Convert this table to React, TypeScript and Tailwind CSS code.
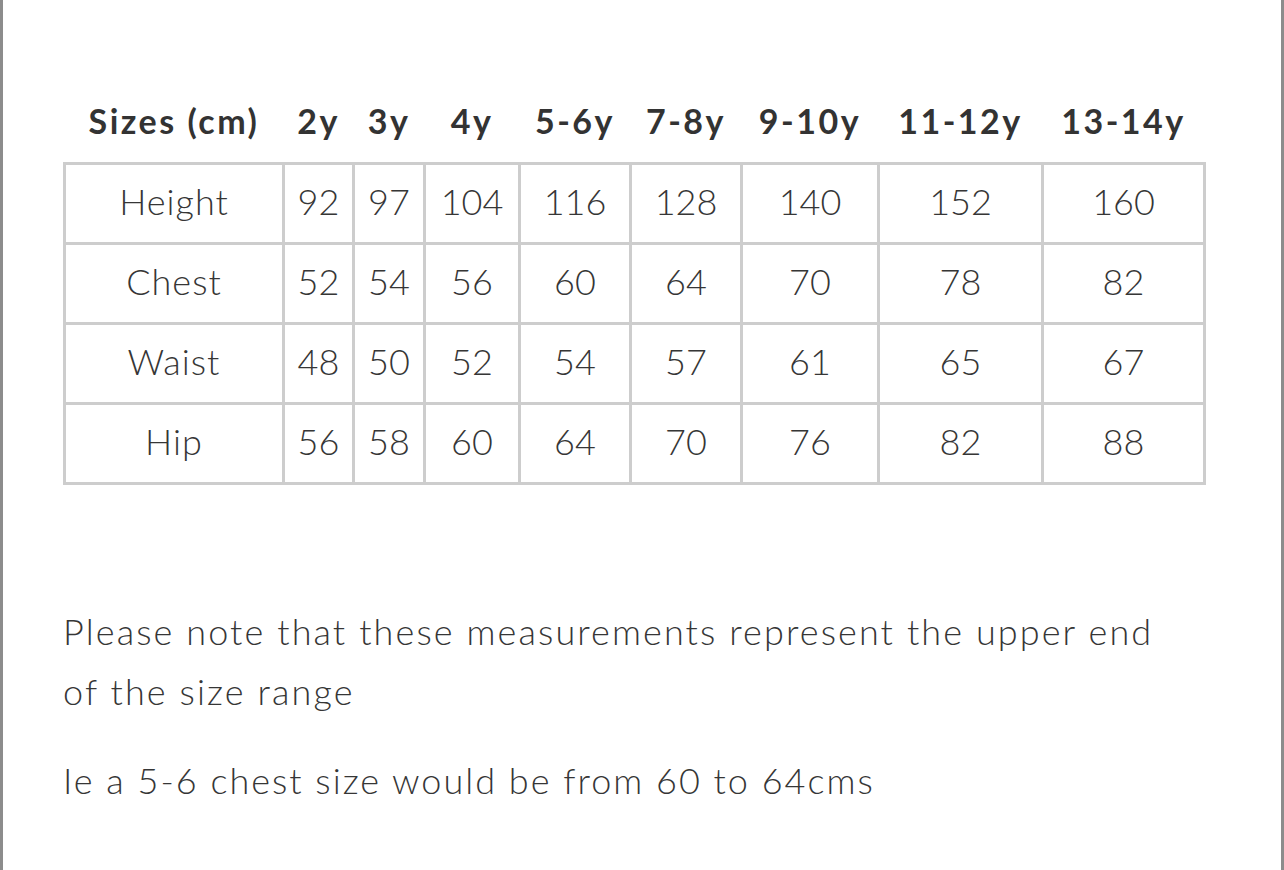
import React from 'react';

// Tabla de tallas: cabeceras y filas
const sizes = ['2y', '3y', '4y', '5-6y', '7-8y', '9-10y', '11-12y', '13-14y'];

const rows: { label: string; values: number[] }[] = [
  { label: 'Height', values: [92, 97, 104, 116, 128, 140, 152, 160] },
  { label: 'Chest', values: [52, 54, 56, 60, 64, 70, 78, 82] },
  { label: 'Waist', values: [48, 50, 52, 54, 57, 61, 65, 67] },
  { label: 'Hip', values: [56, 58, 60, 64, 70, 76, 82, 88] },
];

const cols = 'grid-cols-[216px_67px_68px_92px_108px_108px_134px_161px_159px]';

const App = () => {
  return (
    <div
      className="h-[870px] w-[1284px] border-x-[3px] border-[#8c8c8c] bg-white text-[#363636]"
      style={{ fontFamily: 'Lato, "Open Sans", sans-serif' }}
    >
      <div className="pl-[60px] pt-[101px]">
        {/* Cabecera */}
        <div className={`grid ${cols} gap-x-[3px] px-[3px] mb-[21px] h-[40px] items-center text-[#333]`}>
          <div className="text-center text-[34px] leading-[40px] font-bold tracking-[2.5px] whitespace-nowrap">Sizes (cm)</div>
          {sizes.map((s) => (
            <div key={s} className="text-center text-[34px] leading-[40px] font-bold tracking-[2.5px] whitespace-nowrap">
              {s}
            </div>
          ))}
        </div>

        {/* Cuerpo */}
        <div className={`grid ${cols} gap-[3px] p-[3px] bg-[#cdcdcd] w-fit`}>
          {rows.map((r) => (
            <React.Fragment key={r.label}>
              <div className="bg-white h-[77px] pb-[5px] flex items-center justify-center text-[36px] font-light tracking-[1px]">
                {r.label}
              </div>
              {r.values.map((v, i) => (
                <div key={i} className="bg-white h-[77px] pb-[5px] flex items-center justify-center text-[36px] font-light">
                  {v}
                </div>
              ))}
            </React.Fragment>
          ))}
        </div>

        {/* Notas */}
        <div className="mt-[116px] w-[1110px] text-[36px] leading-[60px] font-light tracking-[2.1px]">
          <p>Please note that these measurements represent the upper end of the size range</p>
          <p className="mt-[29px] tracking-[2px]">Ie a 5-6 chest size would be from 60 to 64cms</p>
        </div>
      </div>
    </div>
  );
};

export default App;
